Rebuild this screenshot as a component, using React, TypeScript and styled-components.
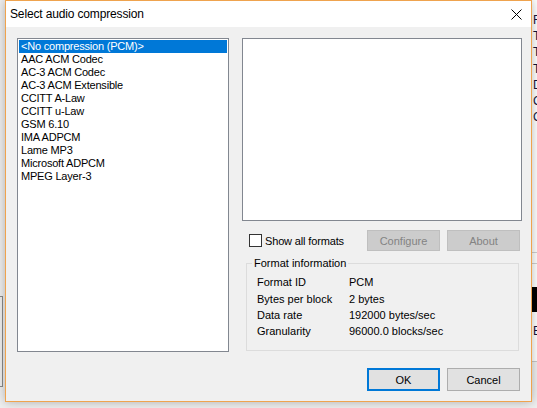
import React from "react";
import styled, { createGlobalStyle } from "styled-components";

const Global = createGlobalStyle`
  html, body { margin: 0; padding: 0; background: #f0f0f0; }
  body { font-family: "Liberation Sans", Arial, sans-serif; }
  * { box-sizing: border-box; }
`;

const Desktop = styled.div`
  position: relative;
  width: 537px;
  height: 408px;
  overflow: hidden;
  background: #efefef;
`;

const BackWindowRight = styled.div`
  position: absolute;
  left: 470px;
  top: -10px;
  width: 120px;
  height: 372px;
  background: #ffffff;
  border: 1px solid #c8c8c8;
  display: flex;
  flex-direction: column;
  padding: 21px 0 0 62px;
  font-size: 12px;
  color: #14143a;
`;

const BackLine = styled.div`
  height: 16.2px;
  line-height: 16px;
  white-space: nowrap;
`;

const BackRule = styled.div<{ $mt: number }>`
  margin-top: ${(p) => p.$mt}px;
  border-top: 1px solid #d0d0d0;
  margin-left: -62px;
`;

const BackBlack = styled.div`
  margin-top: 23px;
  height: 25px;
  background: #000;
  margin-left: -62px;
`;

const BackWindowLeft = styled.div`
  position: absolute;
  left: -200px;
  top: 296px;
  width: 203px;
  height: 91px;
  background: #f0f0f0;
  border: 1px solid #8a8a8a;
`;

const Dialog = styled.div`
  position: absolute;
  left: 5px;
  top: 0;
  width: 527px;
  height: 402px;
  border: 1px solid #efa34e;
  background: #f0f0f0;
  display: flex;
  flex-direction: column;
  box-shadow: 0 0 10px rgba(0, 0, 0, 0.28);
`;

const TitleBar = styled.div`
  height: 26px;
  background: #ffffff;
  display: flex;
  align-items: center;
  padding-left: 4px;
`;

const Title = styled.div`
  flex: 1;
  font-size: 12px;
  letter-spacing: -0.15px;
  color: #000;
  padding-bottom: 1px;
`;

const CloseButton = styled.div`
  width: 30px;
  height: 26px;
  display: flex;
  align-items: center;
  justify-content: center;
`;

const Body = styled.div`
  flex: 1;
  display: flex;
  flex-direction: column;
  padding: 11px 0 0 11px;
  font-size: 11px;
  color: #000;
`;

const Main = styled.div`
  display: grid;
  grid-template-columns: 212px 280px;
  column-gap: 13px;
  height: 314px;
`;

const ListBox = styled.div`
  background: #fff;
  border: 1px solid #828790;
  padding: 1px;
  display: flex;
  flex-direction: column;
`;

const ListItem = styled.div<{ $selected?: boolean }>`
  height: 13px;
  line-height: 13px;
  padding-left: 2px;
  white-space: nowrap;
  letter-spacing: -0.2px;
  background: ${(p) => (p.$selected ? "#0078d7" : "transparent")};
  color: ${(p) => (p.$selected ? "#fff" : "#000")};
`;

const RightColumn = styled.div`
  display: flex;
  flex-direction: column;
`;

const Preview = styled.div`
  height: 183px;
  background: #fff;
  border: 1px solid #828790;
`;

const ControlRow = styled.div`
  margin-top: 9px;
  height: 21px;
  display: flex;
  align-items: center;
  padding-left: 7px;
  padding-right: 2px;
  gap: 7px;
`;

const CheckLabel = styled.label`
  display: flex;
  align-items: center;
  gap: 3px;
  margin-right: auto;
  letter-spacing: -0.15px;
`;

const CheckBox = styled.span`
  width: 13px;
  height: 13px;
  background: #fff;
  border: 1px solid #333;
`;

const Button = styled.div<{ $disabled?: boolean; $default?: boolean }>`
  width: 73px;
  height: ${(p) => (p.$default !== undefined ? 23 : 21)}px;
  display: flex;
  align-items: center;
  justify-content: center;
  background: ${(p) => (p.$disabled ? "#cccccc" : "#e1e1e1")};
  border: ${(p) =>
    p.$default ? "2px solid #0078d7" : p.$disabled ? "1px solid #bfbfbf" : "1px solid #adadad"};
  color: ${(p) => (p.$disabled ? "#838383" : "#000")};
  font-size: 11px;
`;

const Group = styled.fieldset`
  flex: 1;
  margin: 5px 3px 1px 4px;
  border: 1px solid #dcdcdc;
  padding: 4px 0 0 10px;
  min-width: 0;
`;

const Legend = styled.legend`
  padding: 0 2px;
  margin-left: -5px;
  line-height: 14px;
  font-size: 11px;
`;

const InfoGrid = styled.div`
  display: grid;
  grid-template-columns: 92px 1fr;
  grid-auto-rows: 16.35px;
  align-items: center;
`;

const Footer = styled.div`
  margin-top: 16px;
  display: flex;
  justify-content: flex-end;
  gap: 7px;
  padding-right: 11px;
`;

const items = [
  "<No compression (PCM)>",
  "AAC ACM Codec",
  "AC-3 ACM Codec",
  "AC-3 ACM Extensible",
  "CCITT A-Law",
  "CCITT u-Law",
  "GSM 6.10",
  "IMA ADPCM",
  "Lame MP3",
  "Microsoft ADPCM",
  "MPEG Layer-3",
];

const info: [string, string][] = [
  ["Format ID", "PCM"],
  ["Bytes per block", "2 bytes"],
  ["Data rate", "192000 bytes/sec"],
  ["Granularity", "96000.0 blocks/sec"],
];

export default function App() {
  return (
    <>
      <Global />
      <Desktop>
        <BackWindowRight>
          {["From", "To", "Title", "Top", "Dir", "Clip", "Clip"].map((t, i) => (
            <BackLine key={i}>{t}</BackLine>
          ))}
          <BackRule $mt={127} />
          <BackRule $mt={10} />
          <BackBlack />
          <BackLine style={{ marginTop: 11 }}>B</BackLine>
        </BackWindowRight>
        <BackWindowLeft />
        <Dialog>
          <TitleBar>
            <Title>Select audio compression</Title>
            <CloseButton>
              <svg width="11" height="11" viewBox="0 0 11 11">
                <path d="M0.5 0.5 L10.5 10.5 M10.5 0.5 L0.5 10.5" stroke="#000" strokeWidth="1" fill="none" />
              </svg>
            </CloseButton>
          </TitleBar>
          <Body>
            <Main>
              <ListBox>
                {items.map((t, i) => (
                  <ListItem key={t} $selected={i === 0}>
                    {t}
                  </ListItem>
                ))}
              </ListBox>
              <RightColumn>
                <Preview />
                <ControlRow>
                  <CheckLabel>
                    <CheckBox />
                    Show all formats
                  </CheckLabel>
                  <Button $disabled>Configure</Button>
                  <Button $disabled>About</Button>
                </ControlRow>
                <Group>
                  <Legend>Format information</Legend>
                  <InfoGrid>
                    {info.map(([k, v]) => (
                      <React.Fragment key={k}>
                        <span>{k}</span>
                        <span>{v}</span>
                      </React.Fragment>
                    ))}
                  </InfoGrid>
                </Group>
              </RightColumn>
            </Main>
            <Footer>
              <Button $default>OK</Button>
              <Button $default={false}>Cancel</Button>
            </Footer>
          </Body>
        </Dialog>
      </Desktop>
    </>
  );
}
